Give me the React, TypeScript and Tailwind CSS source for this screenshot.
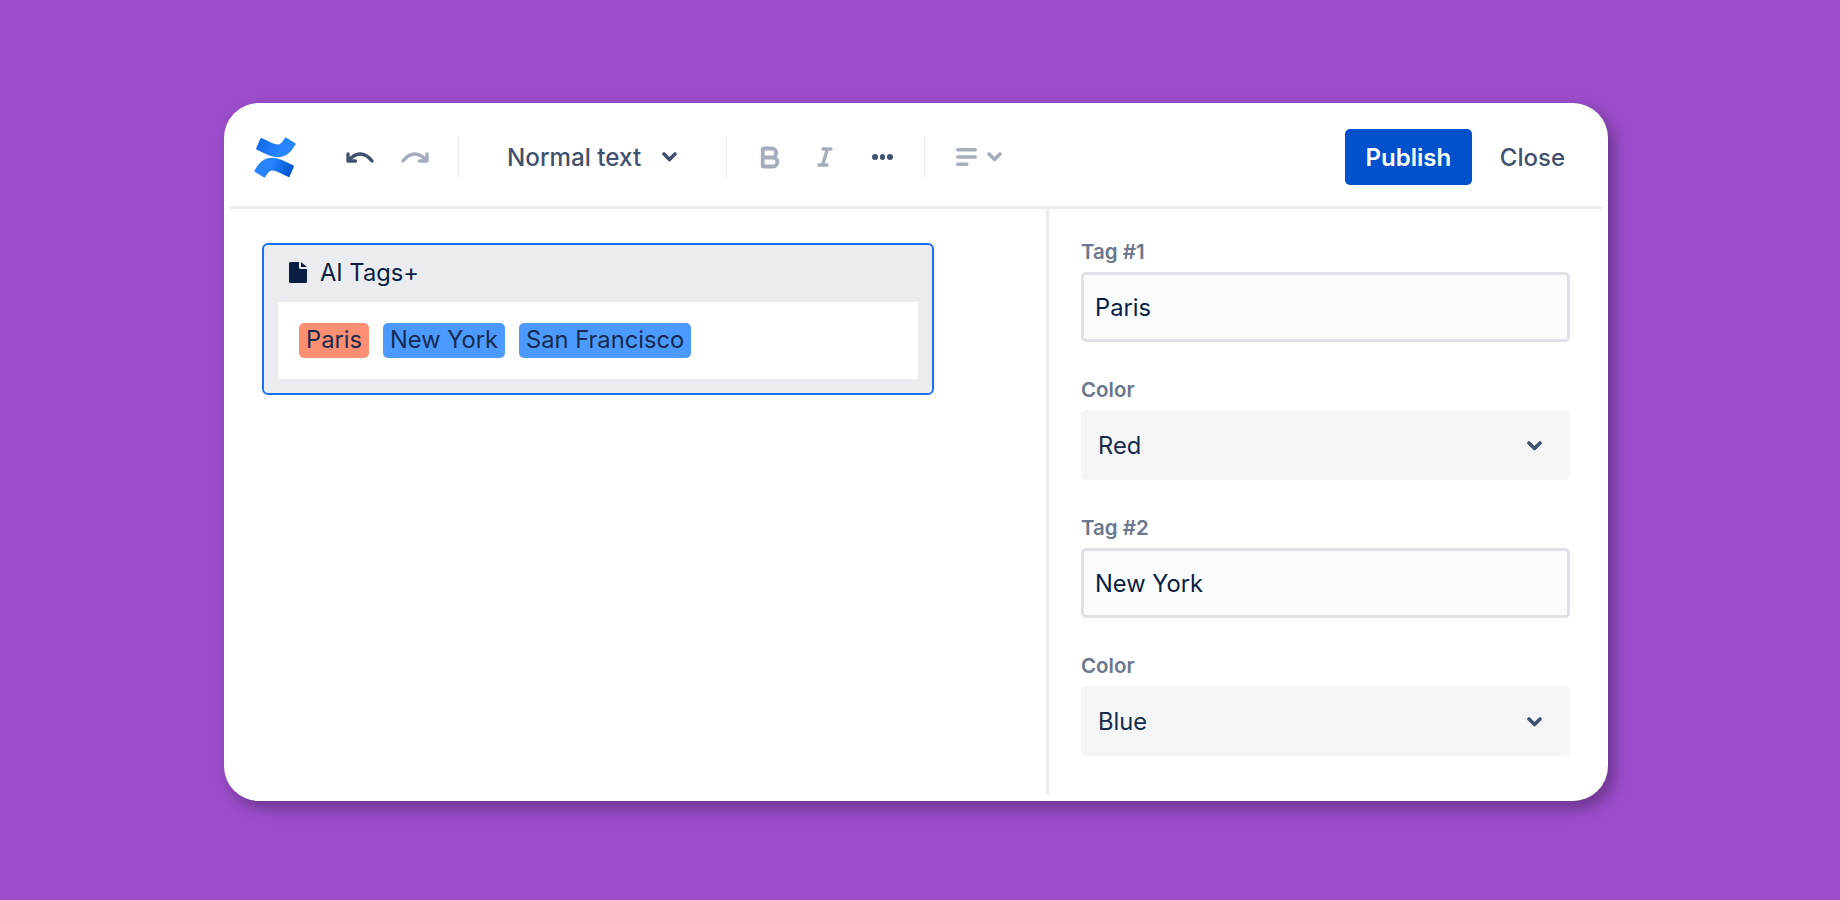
function Logo() {
  return (
    <svg width="42" height="41" viewBox="0 0 24 24" className="shrink-0">
      <defs>
        <linearGradient id="logoTop" x1="1" y1="3" x2="14" y2="8" gradientUnits="userSpaceOnUse">
          <stop offset="0" stopColor="#0F66E4" />
          <stop offset="1" stopColor="#2684FF" />
        </linearGradient>
        <linearGradient id="logoBottom" x1="22" y1="21" x2="10" y2="15" gradientUnits="userSpaceOnUse">
          <stop offset="0" stopColor="#0052CC" />
          <stop offset="1" stopColor="#2684FF" />
        </linearGradient>
      </defs>
      <path
        fill="url(#logoBottom)"
        d="M.87 18.257c-.248.382-.53.875-.763 1.245a.764.764 0 0 0 .255 1.04l4.965 3.054a.764.764 0 0 0 1.058-.26c.199-.332.454-.763.733-1.221 1.967-3.247 3.945-2.853 7.508-1.146l4.957 2.337a.764.764 0 0 0 1.028-.382l2.364-5.346a.764.764 0 0 0-.382-1 599.851 599.851 0 0 1-4.965-2.361C10.911 10.97 5.224 11.185.87 18.257z"
      />
      <path
        fill="url(#logoTop)"
        d="M23.131 5.743c.249-.405.531-.875.764-1.25a.764.764 0 0 0-.256-1.034L18.675.404a.764.764 0 0 0-1.058.26c-.195.33-.451.763-.734 1.225-1.966 3.246-3.945 2.85-7.508 1.146L4.437.694a.764.764 0 0 0-1.027.382L1.046 6.422a.764.764 0 0 0 .382 1c1.039.49 3.105 1.467 4.965 2.361 6.698 3.246 12.385 3.029 16.738-4.04z"
      />
    </svg>
  );
}

function Undo({ color, flip }: { color: string; flip?: boolean }) {
  return (
    <svg width="28" height="12" viewBox="0 0 28 12" fill="none" className={flip ? '-scale-x-100' : ''}>
      <path d="M2 3v7h7.5" stroke={color} strokeWidth="3.4" strokeLinecap="round" strokeLinejoin="round" />
      <path d="M3 9C9 2 18-.5 26 10" stroke={color} strokeWidth="3.4" strokeLinecap="round" />
    </svg>
  );
}

function BoldIcon() {
  return (
    <svg width="27" height="27" viewBox="0 0 24 24" fill="none" stroke="#A5ADBA" strokeWidth="3.4" strokeLinecap="round" strokeLinejoin="round">
      <path d="M6 12h9a4 4 0 0 1 0 8H7a1 1 0 0 1-1-1V5a1 1 0 0 1 1-1h7a4 4 0 0 1 0 8" />
    </svg>
  );
}

function ItalicIcon() {
  return (
    <svg width="24" height="24" viewBox="0 0 24 24" fill="none" stroke="#A5ADBA" strokeWidth="3.4" strokeLinecap="round">
      <path d="M18 4h-8M14 20H6M14.5 4 9.5 20" />
    </svg>
  );
}

function AlignIcon() {
  return (
    <svg width="22" height="18" viewBox="0 0 22 18" fill="#A5ADBA">
      <rect x="0" y="0" width="21" height="3.4" rx="1.7" />
      <rect x="0" y="7.3" width="21" height="3.4" rx="1.7" />
      <rect x="0" y="14.6" width="12.5" height="3.4" rx="1.7" />
    </svg>
  );
}

function Chevron({ color = '#42526E' }: { color?: string }) {
  return (
    <svg width="15" height="10" viewBox="0 0 15 10" fill="none">
      <path d="M2 2l5.5 5.5L13 2" stroke={color} strokeWidth="3.6" strokeLinecap="round" strokeLinejoin="round" />
    </svg>
  );
}

function Divider() {
  return <div className="w-[1px] h-[42px] bg-[#EBECF0] shrink-0" />;
}

function Field({ label, value }: { label: string; value: string }) {
  return (
    <div>
      <div className="text-[20.5px] leading-[24px] font-semibold text-[#6B778C] mb-[8px]">{label}</div>
      <div className="h-[70px] flex items-center border-[3px] border-[#DFE1E6] rounded-[5px] bg-[#FAFBFC] pl-[11px] pt-[2px] text-[23.7px] text-[#091E42]">
        {value}
      </div>
    </div>
  );
}

function SelectField({ label, value }: { label: string; value: string }) {
  return (
    <div>
      <div className="text-[20.5px] leading-[24px] font-semibold text-[#6B778C] mb-[8px]">{label}</div>
      <div className="h-[70px] flex items-center justify-between rounded-[5px] bg-[#F4F5F7] pl-[17px] pr-[28px] text-[23.7px] text-[#172B4D]">
        <span className="pt-[2px]">{value}</span>
        <span className="pt-[2px]"><Chevron /></span>
      </div>
    </div>
  );
}

function Tag({ color, children }: { color: string; children: string }) {
  return (
    <span className={`h-[35px] flex items-center px-[7px] pb-[2px] rounded-[5px] text-[23.7px] text-[#172B4D] ${color}`}>
      {children}
    </span>
  );
}

export default function App() {
  return (
    <div className="w-[1840px] h-[900px] bg-[#9C4DCC] pt-[103px] pl-[224px] font-['Inter',sans-serif] overflow-hidden">
      <div className="w-[1384px] h-[698px] bg-white rounded-[35px] shadow-[6px_7px_16px_rgba(0,0,0,0.32)] px-[6px] pb-[6px] flex flex-col">
        {/* Toolbar */}
        <div className="h-[106px] shrink-0 border-b-[3px] border-[#EBECF0] flex items-center pt-[5px] pl-[24px] pr-[37px]">
          <Logo />
          <div className="ml-[50px] flex items-center gap-[27px]">
            <Undo color="#42526E" />
            <Undo color="#A5ADBA" flip />
          </div>
          <div className="ml-[29px]"><Divider /></div>
          <div className="ml-[48px] pt-[2px] text-[24.2px] font-medium text-[#42526E]">Normal text</div>
          <div className="ml-[21px]"><Chevron /></div>
          <div className="ml-[49px]"><Divider /></div>
          <div className="ml-[29px]"><BoldIcon /></div>
          <div className="ml-[30px]"><ItalicIcon /></div>
          <div className="ml-[35px] flex gap-[2px]">
            <span className="w-[5.5px] h-[5.5px] rounded-full bg-[#42526E]" />
            <span className="w-[5.5px] h-[5.5px] rounded-full bg-[#42526E]" />
            <span className="w-[5.5px] h-[5.5px] rounded-full bg-[#42526E]" />
          </div>
          <div className="ml-[31px]"><Divider /></div>
          <div className="ml-[31px]"><AlignIcon /></div>
          <div className="ml-[9px]"><Chevron color="#A5ADBA" /></div>
          <div className="ml-auto flex items-center gap-[28px]">
            <button className="w-[127px] h-[56px] pt-[1px] bg-[#0052CC] rounded-[5px] text-white text-[24px] font-semibold">Publish</button>
            <button className="pt-[2px] text-[24px] font-medium text-[#42526E]">Close</button>
          </div>
        </div>

        <div className="flex-1 flex">
          {/* Editor */}
          <div className="w-[819px] shrink-0 border-r-[3px] border-[#EBECF0] pl-[32px] pt-[34px]">
            <div className="w-[672px] h-[152px] border-2 border-[#1B6FF0] rounded-[6px] bg-[#EBECF0] px-[14px] flex flex-col">
              <div className="h-[57px] shrink-0 flex items-center pl-[11px] pb-[2px] gap-[13px] text-[23.7px] text-[#091E42]">
                <svg width="18" height="21" viewBox="0 0 18 21" fill="#091E42">
                  <path d="M1.5 0H10v5.5A1.5 1.5 0 0 0 11.5 7H18v12.5a1.5 1.5 0 0 1-1.5 1.5h-15A1.5 1.5 0 0 1 0 19.5v-18A1.5 1.5 0 0 1 1.5 0zM12 0l6 5h-6z" />
                </svg>
                AI Tags+
              </div>
              <div className="h-[77px] shrink-0 bg-white flex items-center pl-[21px] gap-[14px]">
                <Tag color="bg-[#FF8F73]">Paris</Tag>
                <Tag color="bg-[#4C9AFF]">New York</Tag>
                <Tag color="bg-[#4C9AFF]">San Francisco</Tag>
              </div>
            </div>
          </div>

          {/* Side panel */}
          <div className="flex-1 pl-[32px] pr-[32px] pt-[31px] flex flex-col gap-[36px]">
            <Field label="Tag #1" value="Paris" />
            <SelectField label="Color" value="Red" />
            <Field label="Tag #2" value="New York" />
            <SelectField label="Color" value="Blue" />
          </div>
        </div>
      </div>
    </div>
  );
}
